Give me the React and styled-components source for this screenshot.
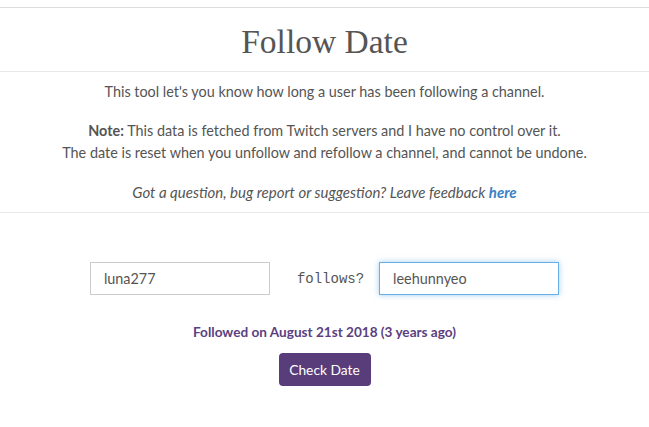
import React from "react";
import styled, { createGlobalStyle } from "styled-components";

const GlobalStyle = createGlobalStyle`
  html, body {
    margin: 0;
    padding: 0;
    background: #ffffff;
  }
  body {
    font-family: Lato, "Liberation Sans", sans-serif;
    color: #555555;
  }
`;

export default function App() {
  return (
    <>
      <GlobalStyle />
      <Page>
        <TopBar />
        <Header>
          <Title>Follow Date</Title>
        </Header>
        <Intro>
          <p>This tool let's you know how long a user has been following a channel.</p>
          <p>
            <strong>Note:</strong> This data is fetched from Twitch servers and I have no control over it.
            <br />
            The date is reset when you unfollow and refollow a channel, and cannot be undone.
          </p>
          <Feedback>
            Got a question, bug report or suggestion? Leave feedback <a href="#">here</a>
          </Feedback>
        </Intro>
        <Form>
          <InputRow>
            <TextInput defaultValue="luna277" />
            <FollowsLabel>follows?</FollowsLabel>
            <TextInput defaultValue="leehunnyeo" $focused />
          </InputRow>
          <Result>Followed on August 21st 2018 (3 years ago)</Result>
          <SubmitButton>Check Date</SubmitButton>
        </Form>
      </Page>
    </>
  );
}

const Page = styled.div`
  width: 100%;
  min-height: 100vh;
  display: flex;
  flex-direction: column;
`;

const TopBar = styled.div`
  height: 7px;
  border-bottom: 1px solid #dddddd;
`;

const Header = styled.header`
  height: 64px;
  box-sizing: border-box;
  padding-top: 5px;
  display: flex;
  align-items: center;
  justify-content: center;
  border-bottom: 1px solid #e8e8e8;
`;

const Title = styled.h1`
  margin: 0;
  font-family: "Liberation Serif", serif;
  font-weight: normal;
  font-size: 33.5px;
  color: #555555;
`;

const Intro = styled.section`
  display: flex;
  flex-direction: column;
  gap: 17px;
  padding: 9px 0 9px;
  border-bottom: 1px solid #e8e8e8;
  text-align: center;
  font-size: 14.4px;
  line-height: 22px;
  p {
    margin: 0;
  }
  strong {
    font-weight: bold;
  }
  a {
    color: #3b82c4;
    font-weight: bold;
    text-decoration: none;
  }
`;

const Feedback = styled.p`
  font-style: italic;
  font-size: 15px;
`;

const Form = styled.div`
  display: flex;
  flex-direction: column;
  align-items: center;
  padding-top: 49px;
`;

const InputRow = styled.div`
  display: flex;
  align-items: center;
  justify-content: center;
`;

const TextInput = styled.input`
  box-sizing: border-box;
  width: 180px;
  height: 33px;
  padding: 0 13px;
  font-family: Lato, "Liberation Sans", sans-serif;
  font-size: 14.4px;
  color: #555555;
  background: #ffffff;
  border: 1px solid ${(p) => (p.$focused ? "#66afe9" : "#cccccc")};
  box-shadow: ${(p) => (p.$focused ? "0 0 6px rgba(102, 175, 233, 0.6)" : "none")};
  outline: none;
`;

const FollowsLabel = styled.span`
  font-family: "Liberation Mono", monospace;
  font-size: 14px;
  color: #555555;
  margin: 0 15px 0 27px;
`;

const Result = styled.div`
  margin-top: 27px;
  font-size: 13.6px;
  font-weight: bold;
  color: #5b3f80;
  line-height: 20px;
`;

const SubmitButton = styled.button`
  margin-top: 11px;
  width: 92px;
  height: 33px;
  border: none;
  border-radius: 4px;
  background: #583d7a;
  color: #ffffff;
  font-family: Lato, "Liberation Sans", sans-serif;
  font-size: 13.8px;
  cursor: pointer;
`;
